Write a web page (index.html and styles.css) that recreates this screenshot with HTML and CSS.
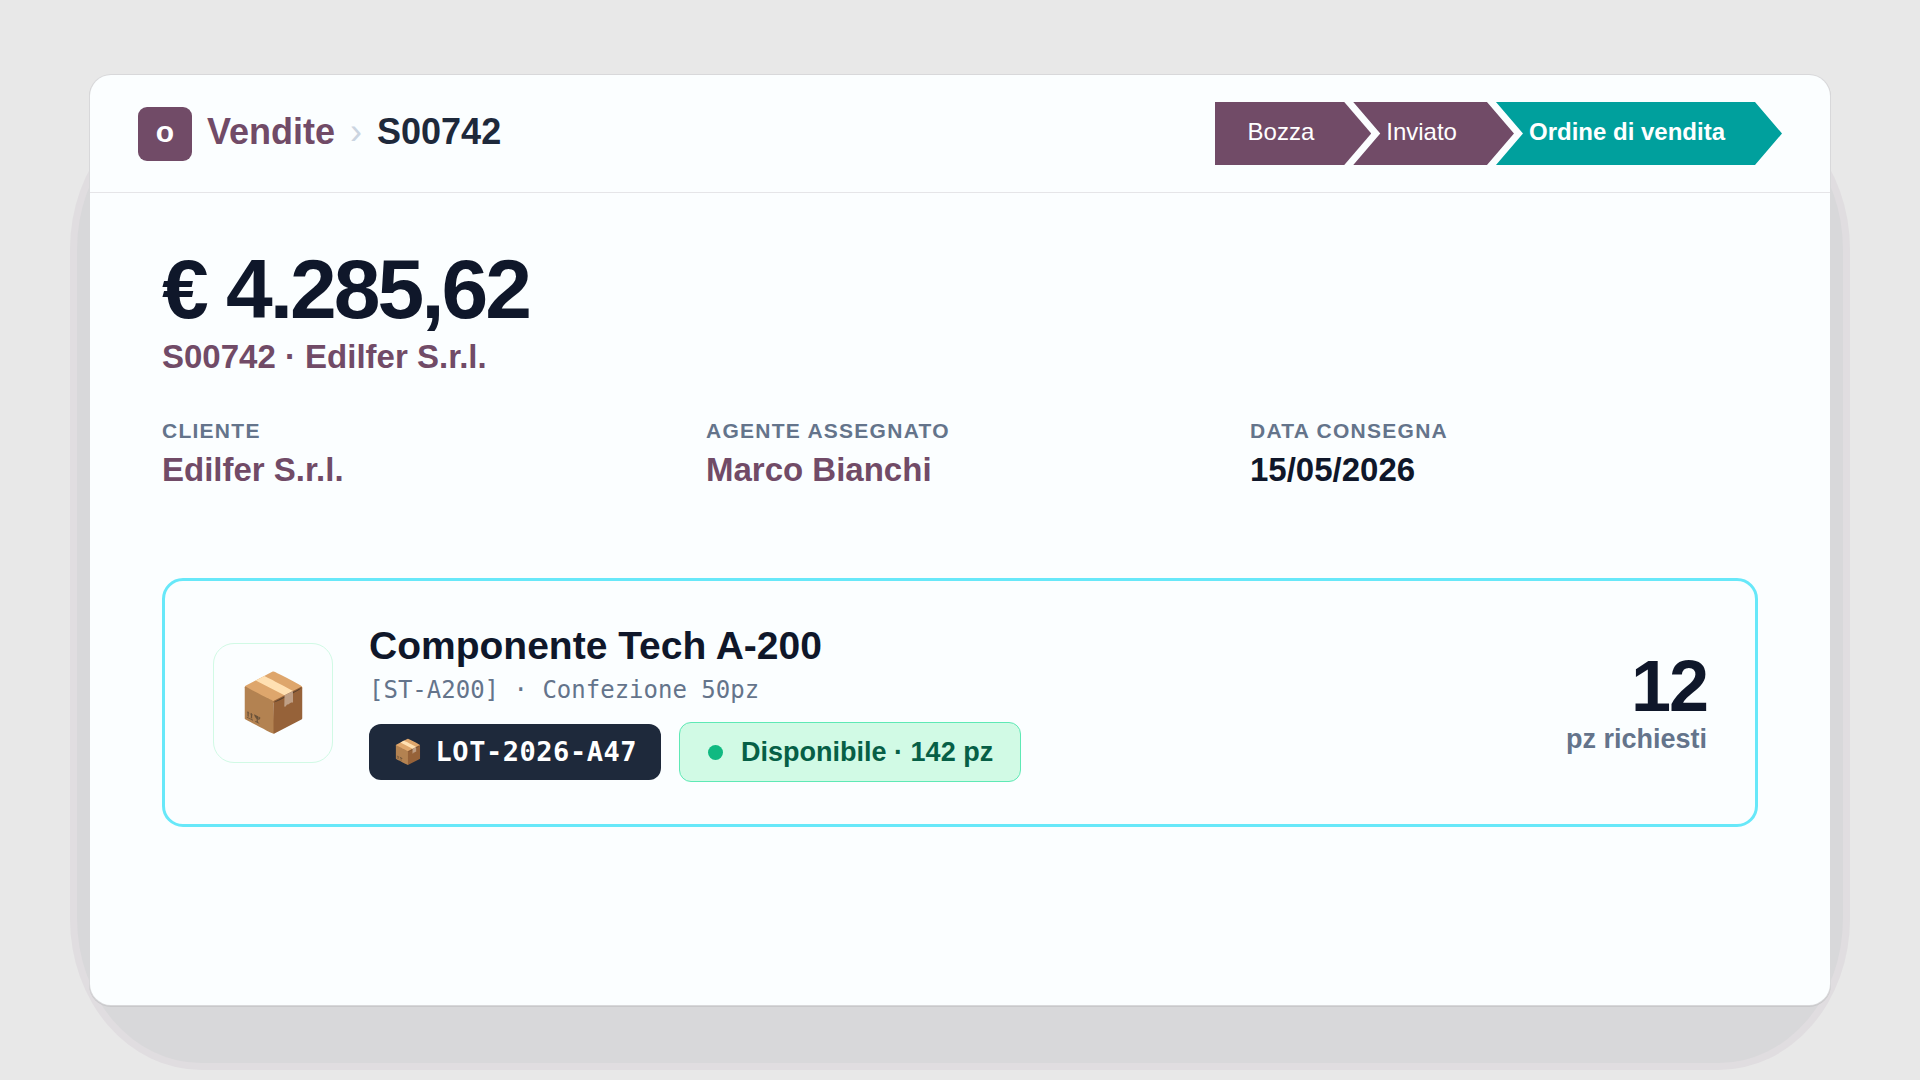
FILE: index.html
```html
<!DOCTYPE html>
<html lang="it">
<head>
    <meta charset="UTF-8">
    <meta name="viewport" content="width=device-width, initial-scale=1">
    <title>Vendite - S00742</title>
    <link rel="stylesheet" href="styles.css">
</head>
<body>

    <main class="window">
        <div class="sheet">
            <header class="topbar">
                <nav class="breadcrumb">
                    <span class="logo">o</span>
                    <a class="crumb" href="#">Vendite</a>
                    <span class="separator">›</span>
                    <span class="current">S00742</span>
                </nav>
                <div class="steps">
                    <span class="step first">Bozza</span>
                    <span class="step">Inviato</span>
                    <span class="step active">Ordine di vendita</span>
                </div>
            </header>

            <section class="content">
                <h1 class="amount">€ 4.285,62</h1>
                <p class="subtitle">S00742 · Edilfer S.r.l.</p>

                <dl class="fields">
                    <div class="field">
                        <dt>Cliente</dt>
                        <dd>Edilfer S.r.l.</dd>
                    </div>
                    <div class="field">
                        <dt>Agente assegnato</dt>
                        <dd>Marco Bianchi</dd>
                    </div>
                    <div class="field">
                        <dt>Data consegna</dt>
                        <dd class="dark">15/05/2026</dd>
                    </div>
                </dl>

                <article class="product">
                    <div class="thumb">📦</div>
                    <div class="info">
                        <h2 class="name">Componente Tech A-200</h2>
                        <p class="code">[ST-A200] · Confezione 50pz</p>
                        <div class="tags">
                            <span class="lot"><span class="lot-icon">📦</span>LOT-2026-A47</span>
                            <span class="stock"><span class="dot"></span>Disponibile · 142 pz</span>
                        </div>
                    </div>
                    <div class="quantity">
                        <div class="number">12</div>
                        <div class="unit">pz richiesti</div>
                    </div>
                </article>
            </section>
        </div>
    </main>

</body>
</html>
```
FILE: styles.css
```css
/* General Styles */
* { box-sizing: border-box; }

body {
    font-family: "Liberation Sans", Arial, sans-serif;
    margin: 0;
    min-height: 100vh;
    padding: 75px 90px;
    background-color: #e8e8e8;
    color: #0f172a;
    display: flex;
}

h1, h2, p, dl, dd { margin: 0; }

/* Window */
.window {
    position: relative;
    z-index: 0;
    flex: 1;
    display: flex;
}

/* Two-tone shadow under the sheet */
.window::before {
    content: "";
    position: absolute;
    z-index: -1;
    inset: 30px -13px -58px;
    background-color: #d8d8da;
    border-radius: 124px / 144px;
    box-shadow: 0 0 0 7px #e0dde0;
}

.sheet {
    flex: 1;
    background-color: #fbfeff;
    border-radius: 21px;
    box-shadow: 0 0 0 1px #d8d8da, 0 1px 0 1px #c8c8ca;
}

/* Top bar */
.topbar {
    display: flex;
    justify-content: space-between;
    align-items: center;
    padding: 27px 48px;
    border-bottom: 1px solid #e5e5e8;
}

.breadcrumb {
    display: flex;
    align-items: center;
    gap: 15px;
    font-size: 36px;
    line-height: 42px;
    font-weight: bold;
}

.logo {
    width: 54px;
    height: 54px;
    padding-bottom: 4px;
    display: flex;
    align-items: center;
    justify-content: center;
    background-color: #714b67;
    color: white;
    font-size: 30px;
    border-radius: 9px;
}

.crumb, .separator, .current { padding-bottom: 4px; }
.crumb { color: #714b67; text-decoration: none; }
.separator { color: #cbd5e1; font-weight: normal; }
.current { color: #1e293b; }

/* Status steps */
.steps { display: flex; }

.step {
    padding: 16px 57px 19px 33px;
    margin-left: -18px;
    font-size: 24px;
    line-height: 28px;
    background-color: #714b67;
    color: white;
    clip-path: polygon(0 0, calc(100% - 27px) 0, 100% 50%, calc(100% - 27px) 100%, 0 100%, 27px 50%);
}

.step.first {
    margin-left: 0;
    clip-path: polygon(0 0, calc(100% - 27px) 0, 100% 50%, calc(100% - 27px) 100%, 0 100%);
}

.step.active { background-color: #00a09d; font-weight: bold; }

/* Content */
.content { padding: 54px 72px; }

.amount {
    font-size: 84px;
    line-height: 84px;
    letter-spacing: -3px;
}

.subtitle {
    margin-top: 6px;
    font-size: 33px;
    line-height: 40px;
    font-weight: bold;
    color: #714b67;
}

/* Fields */
.fields {
    display: grid;
    grid-template-columns: repeat(3, 1fr);
    gap: 36px;
    margin-top: 42px;
}

.field dt {
    font-size: 21px;
    line-height: 24px;
    font-weight: bold;
    letter-spacing: 0.06em;
    text-transform: uppercase;
    color: #64748b;
}

.field dd {
    margin-top: 7px;
    font-size: 33px;
    line-height: 40px;
    font-weight: bold;
    color: #714b67;
}

.field dd.dark { color: #0f172a; }

/* Product card */
.product {
    display: flex;
    align-items: center;
    gap: 36px;
    margin-top: 88px;
    padding: 42px 48px;
    border: 3px solid #67e8f9;
    border-radius: 21px;
}

.thumb {
    width: 120px;
    height: 120px;
    display: flex;
    align-items: center;
    justify-content: center;
    border: 1px solid #d1fae5;
    border-radius: 21px;
    font-size: 57px;
}

.info { flex: 1; }

.name {
    font-size: 39px;
    line-height: 46px;
}

.code {
    margin-top: 3px;
    font-family: "DejaVu Sans Mono", monospace;
    font-size: 24px;
    line-height: 36px;
    color: #64748b;
}

.tags {
    display: flex;
    align-items: center;
    gap: 18px;
    margin-top: 14px;
}

.lot, .stock {
    display: flex;
    align-items: center;
    font-size: 27px;
    line-height: 32px;
    font-weight: bold;
    border-radius: 12px;
}

.lot {
    gap: 12px;
    padding: 12px 24px;
    background-color: #1e293b;
    color: white;
    font-family: "DejaVu Sans Mono", monospace;
    letter-spacing: 0.02em;
}

.lot-icon { font-size: 24px; }

.stock {
    gap: 18px;
    padding: 13px 27px 13px 28px;
    background-color: #d1fae5;
    border: 1px solid #5ee9b5;
    color: #065f46;
}

.dot {
    width: 15px;
    height: 15px;
    background-color: #10b981;
    border-radius: 50%;
}

/* Quantity */
.quantity { text-align: right; }

.number {
    font-size: 72px;
    line-height: 72px;
    font-weight: bold;
    letter-spacing: -2px;
}

.unit {
    font-size: 27px;
    line-height: 34px;
    font-weight: bold;
    color: #64748b;
}
```
